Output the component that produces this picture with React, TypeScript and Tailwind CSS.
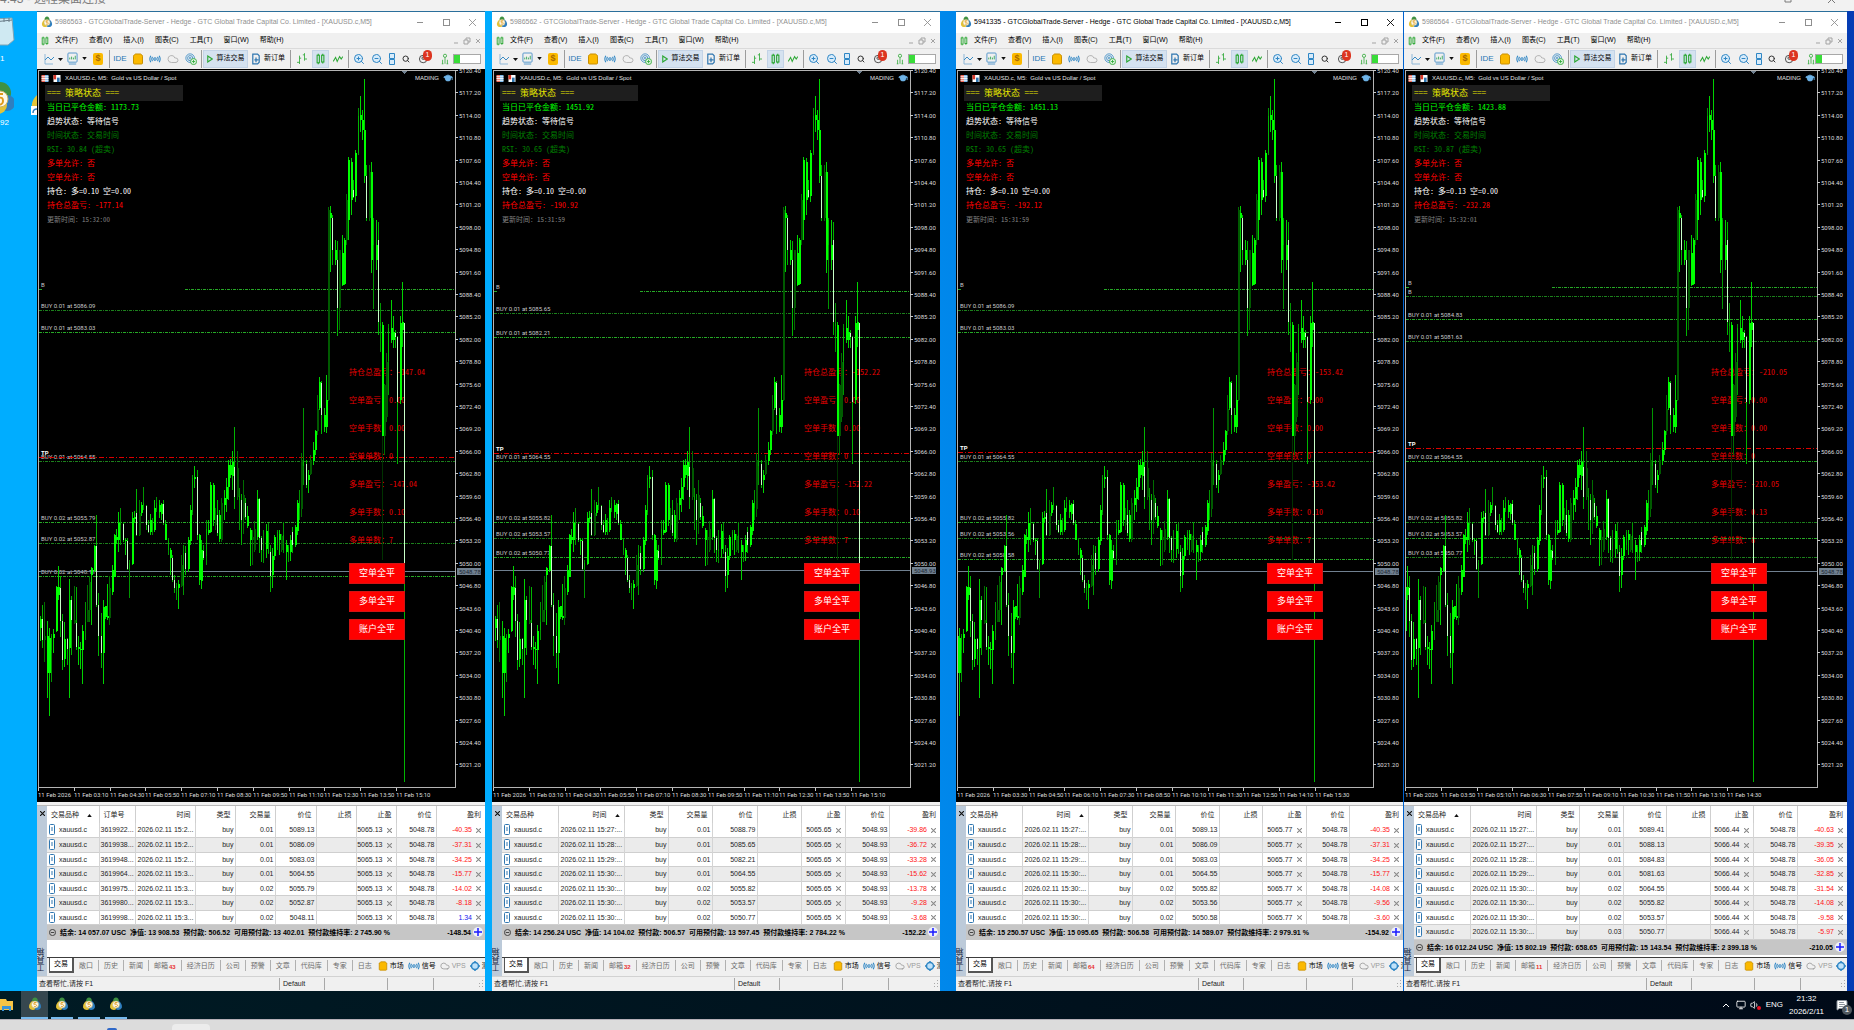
import type { ReactNode } from 'react';
import { clsx } from 'clsx';
import { Cloud, GraduationCap, MessageSquareText, Monitor, Search, ShoppingBag, Volume1, ZoomIn, ZoomOut } from 'lucide-react';

type Tone = 'g' | 'm' | 'd' | 'w';
// x, high, low, body top, body bottom, tone
type Candle = [number, number, number, number, number, Tone];

type Position = {
  order?: string;
  time: string;
  volume: string;
  open: string;
  profit: string;
};

type Terminal = {
  account: string;
  active?: boolean;
  closedToday: string;
  rsi: string;
  longLots: string;
  panelProfit: string;
  updated: string;
  profit: string;
  positions: Position[];
  tp: string;
  price: string;
  total: string;
  summary: string;
  mails: string;
  times: string[];
  shift: number;
  hiddenEntries: number;
  buttonsLeft: string;
  cols: string[];
  sortOn: 'symbol' | 'time';
};

const TOP_PRICE = 5120.4;
const PX_PER_POINT = 7;
const FIRST_TICK_Y = 1;

const CANDLES: Candle[] = [
  [38, 618, 628, 625, 628, 'w'], [40, 616, 641, 619, 628, 'g'], [42, 605, 648, 619, 640, 'w'], [44, 602, 662, 636, 640, 'd'],
  [47, 621, 698, 636, 673, 'g'], [49, 628, 716, 638, 673, 'g'], [51, 634, 682, 636, 650, 'm'], [53, 629, 653, 634, 638, 'g'],
  [56, 586, 632, 587, 631, 'g'], [58, 566, 600, 587, 595, 'g'], [60, 576, 637, 588, 621, 'w'], [62, 614, 670, 621, 660, 'w'],
  [64, 622, 667, 639, 659, 'g'], [67, 638, 665, 639, 649, 'w'], [69, 579, 698, 600, 648, 'g'], [71, 596, 655, 600, 620, 'w'],
  [74, 586, 624, 620, 623, 'd'], [76, 587, 650, 623, 647, 'w'], [78, 636, 665, 647, 649, 'g'], [80, 642, 669, 649, 650, 'g'],
  [82, 625, 684, 631, 650, 'g'], [85, 602, 640, 622, 630, 'm'], [87, 585, 622, 610, 622, 'd'], [89, 576, 622, 582, 610, 'd'],
  [91, 567, 625, 568, 575, 'g'], [94, 545, 572, 546, 571, 'g'], [96, 515, 607, 546, 605, 'w'], [98, 593, 656, 605, 636, 'w'],
  [101, 613, 668, 636, 653, 'w'], [103, 600, 684, 607, 653, 'g'], [105, 606, 619, 606, 617, 'g'], [107, 584, 620, 616, 618, 'g'],
  [109, 576, 625, 588, 618, 'd'], [112, 565, 595, 570, 592, 'g'], [114, 534, 577, 535, 577, 'g'], [116, 529, 544, 537, 540, 'g'],
  [118, 512, 552, 523, 540, 'g'], [120, 508, 545, 523, 525, 'm'], [123, 522, 542, 524, 540, 'w'], [125, 538, 555, 540, 541, 'g'],
  [127, 538, 570, 541, 569, 'w'], [129, 560, 598, 563, 569, 'm'], [132, 512, 565, 518, 564, 'g'], [134, 511, 523, 517, 519, 'g'],
  [136, 489, 536, 513, 535, 'w'], [139, 500, 536, 513, 535, 'd'], [141, 502, 516, 505, 513, 'g'], [143, 487, 510, 503, 506, 'm'],
  [146, 505, 530, 506, 525, 'w'], [148, 520, 533, 525, 532, 'w'], [150, 514, 535, 520, 532, 'g'], [152, 518, 535, 521, 530, 'm'],
  [154, 500, 532, 508, 530, 'g'], [156, 497, 512, 503, 510, 'm'], [159, 500, 518, 505, 512, 'g'], [161, 503, 520, 504, 514, 'g'],
  [163, 500, 525, 504, 523, 'w'], [165, 520, 540, 524, 540, 'g'], [168, 538, 555, 540, 550, 'm'], [170, 548, 575, 550, 558, 'g'],
  [172, 555, 582, 558, 580, 'w'], [174, 575, 593, 580, 588, 'w'], [176, 583, 600, 586, 590, 'm'], [178, 580, 609, 584, 588, 'g'],
  [181, 555, 587, 565, 586, 'd'], [183, 545, 595, 553, 585, 'm'], [185, 546, 575, 553, 569, 'w'], [188, 537, 572, 540, 569, 'g'],
  [190, 505, 545, 510, 541, 'g'], [192, 475, 515, 478, 512, 'm'], [194, 466, 488, 477, 479, 'g'], [197, 470, 540, 477, 535, 'w'],
  [199, 534, 585, 535, 580, 'g'], [201, 540, 589, 550, 581, 'g'], [203, 545, 560, 551, 558, 'w'], [206, 520, 565, 529, 556, 'm'],
  [208, 520, 535, 530, 533, 'g'], [210, 482, 533, 485, 532, 'g'], [213, 483, 526, 485, 520, 'g'], [215, 508, 530, 515, 525, 'd'],
  [217, 500, 536, 515, 533, 'w'], [219, 510, 542, 515, 539, 'g'], [221, 498, 542, 503, 540, 'd'], [224, 490, 520, 498, 505, 'g'],
  [226, 478, 512, 487, 499, 'g'], [228, 460, 500, 465, 487, 'g'], [230, 459, 478, 465, 475, 'g'], [232, 451, 490, 462, 476, 'g'],
  [234, 427, 509, 467, 497, 'w'], [237, 451, 500, 468, 497, 'd'], [239, 488, 530, 496, 500, 'm'], [241, 494, 545, 500, 520, 'w'],
  [243, 480, 534, 495, 518, 'd'], [245, 498, 520, 503, 517, 'w'], [247, 506, 528, 516, 526, 'g'], [250, 528, 566, 530, 540, 'g'],
  [252, 530, 565, 537, 540, 'd'], [254, 521, 552, 529, 550, 'd'], [257, 490, 540, 499, 537, 'g'], [259, 498, 553, 499, 538, 'w'],
  [261, 536, 562, 538, 550, 'w'], [263, 530, 563, 549, 551, 'm'], [266, 524, 558, 531, 549, 'g'], [268, 523, 554, 533, 553, 'm'],
  [270, 545, 592, 552, 576, 'w'], [272, 548, 588, 556, 575, 'g'], [274, 535, 560, 537, 556, 'g'], [277, 530, 550, 532, 545, 'm'],
  [279, 530, 555, 534, 540, 'g'], [281, 534, 552, 536, 550, 'd'], [283, 522, 553, 535, 540, 'm'], [286, 540, 580, 545, 552, 'g'],
  [288, 545, 562, 547, 553, 'm'], [290, 535, 561, 540, 552, 'g'], [292, 527, 553, 532, 545, 'w'], [295, 525, 547, 527, 545, 'g'],
  [297, 500, 535, 503, 531, 'g'], [299, 490, 520, 501, 508, 'm'], [301, 453, 517, 460, 509, 'd'], [303, 408, 485, 461, 466, 'm'],
  [306, 460, 488, 464, 485, 'w'], [308, 470, 493, 475, 480, 'g'], [310, 455, 475, 460, 474, 'd'], [313, 442, 465, 450, 461, 'g'],
  [315, 430, 455, 431, 450, 'g'], [317, 395, 435, 409, 431, 'd'], [319, 377, 410, 382, 408, 'g'], [321, 381, 434, 383, 415, 'w'],
  [324, 408, 432, 415, 427, 'g'], [326, 375, 433, 400, 427, 'g'], [328, 207, 401, 210, 400, 'd'], [330, 206, 272, 213, 218, 'g'],
  [332, 215, 265, 218, 250, 'w'], [335, 240, 265, 250, 260, 'g'], [337, 241, 336, 260, 308, 'w'], [339, 250, 330, 250, 308, 'd'],
  [342, 235, 286, 253, 285, 'g'], [344, 238, 285, 240, 284, 'g'], [346, 194, 245, 200, 240, 'd'], [348, 157, 240, 160, 220, 'g'],
  [351, 158, 215, 162, 200, 'g'], [353, 180, 198, 190, 197, 'w'], [355, 150, 202, 153, 196, 'g'], [358, 108, 155, 116, 153, 'm'],
  [360, 96, 132, 115, 120, 'g'], [362, 110, 140, 120, 130, 'g'], [364, 79, 183, 130, 176, 'g'], [366, 165, 221, 176, 218, 'w'],
  [369, 165, 221, 172, 218, 'd'], [371, 162, 273, 172, 260, 'g'], [373, 218, 309, 220, 245, 'm'], [376, 220, 270, 245, 260, 'g'],
  [378, 222, 335, 240, 322, 'w'], [380, 303, 352, 323, 326, 'm'], [382, 322, 436, 325, 436, 'g'], [384, 384, 455, 385, 436, 'd'],
  [386, 353, 422, 362, 417, 'd'], [388, 324, 395, 328, 361, 'm'], [391, 300, 343, 328, 340, 'g'], [393, 316, 348, 332, 340, 'g'],
  [395, 330, 348, 333, 337, 'w'], [397, 336, 464, 337, 402, 'w'], [400, 316, 404, 323, 400, 'g'], [402, 282, 347, 322, 330, 'g'],
  [404, 323, 782, 323, 563, 'w'],
];

const BODY: Record<Tone, string> = { g: '#00ff00', m: '#00b400', d: '#005a00', w: '#c8ffc8' };
const WICK: Record<Tone, string> = { g: '#00d200', m: '#009600', d: '#006e00', w: '#00b400' };

const TERMINALS: Terminal[] = [
  {
    account: '5986563',
    closedToday: '1173.73',
    rsi: '30.84',
    longLots: '0.10',
    panelProfit: '-177.14',
    updated: '15:32:00',
    profit: '-147.04',
    positions: [
      { order: '3619922...', time: '2026.02.11 15:2...', volume: '0.01', open: '5089.13', profit: '-40.35' },
      { order: '3619938...', time: '2026.02.11 15:2...', volume: '0.01', open: '5086.09', profit: '-37.31' },
      { order: '3619948...', time: '2026.02.11 15:2...', volume: '0.01', open: '5083.03', profit: '-34.25' },
      { order: '3619964...', time: '2026.02.11 15:3...', volume: '0.01', open: '5064.55', profit: '-15.77' },
      { order: '3619975...', time: '2026.02.11 15:3...', volume: '0.02', open: '5055.79', profit: '-14.02' },
      { order: '3619980...', time: '2026.02.11 15:3...', volume: '0.02', open: '5052.87', profit: '-8.18' },
      { order: '3619998...', time: '2026.02.11 15:3...', volume: '0.02', open: '5048.11', profit: '1.34' },
    ],
    tp: '5065.13',
    price: '5048.78',
    total: '-148.54',
    summary: '结余: 14 057.07 USC  净值: 13 908.53  预付款: 506.52  可用预付款: 13 402.01  预付款维持率: 2 745.90 %',
    mails: '43',
    times: ['2026', '03:10', '04:30', '05:50', '07:10', '08:30', '09:50', '11:10', '12:30', '13:50', '15:10'],
    shift: 0,
    hiddenEntries: 1,
    buttonsLeft: 'left-[312px]',
    cols: ['w-[52px]', 'w-[36px]', 'w-[60px]', 'w-[40px]', 'w-[40px]', 'w-[41px]', 'w-[40px]', 'w-[40px]', 'w-[40px]', ''],
    sortOn: 'symbol',
  },
  {
    account: '5986562',
    closedToday: '1451.92',
    rsi: '30.65',
    longLots: '0.10',
    panelProfit: '-190.92',
    updated: '15:31:59',
    profit: '-152.22',
    positions: [
      { time: '2026.02.11 15:27:...', volume: '0.01', open: '5088.79', profit: '-39.86' },
      { time: '2026.02.11 15:28:...', volume: '0.01', open: '5085.65', profit: '-36.72' },
      { time: '2026.02.11 15:29:...', volume: '0.01', open: '5082.21', profit: '-33.28' },
      { time: '2026.02.11 15:30:...', volume: '0.01', open: '5064.55', profit: '-15.62' },
      { time: '2026.02.11 15:30:...', volume: '0.02', open: '5055.82', profit: '-13.78' },
      { time: '2026.02.11 15:30:...', volume: '0.02', open: '5053.57', profit: '-9.28' },
      { time: '2026.02.11 15:30:...', volume: '0.02', open: '5050.77', profit: '-3.68' },
    ],
    tp: '5065.65',
    price: '5048.93',
    total: '-152.22',
    summary: '结余: 14 256.24 USC  净值: 14 104.02  预付款: 506.57  可用预付款: 13 597.45  预付款维持率: 2 784.22 %',
    mails: '32',
    times: ['2026', '03:10', '04:30', '05:50', '07:10', '08:30', '09:50', '11:10', '12:30', '13:50', '15:10'],
    shift: 0,
    hiddenEntries: 1,
    buttonsLeft: 'left-[312px]',
    cols: ['w-[56px]', 'w-[66px]', 'w-[44px]', 'w-[44px]', 'w-[45px]', 'w-[44px]', 'w-[44px]', 'w-[44px]', ''],
    sortOn: 'time',
  },
  {
    account: '5941335',
    active: true,
    closedToday: '1451.13',
    rsi: '30.65',
    longLots: '0.10',
    panelProfit: '-192.12',
    updated: '15:31:59',
    profit: '-153.42',
    positions: [
      { time: '2026.02.11 15:27:...', volume: '0.01', open: '5089.13', profit: '-40.35' },
      { time: '2026.02.11 15:28:...', volume: '0.01', open: '5086.09', profit: '-37.31' },
      { time: '2026.02.11 15:29:...', volume: '0.01', open: '5083.03', profit: '-34.25' },
      { time: '2026.02.11 15:30:...', volume: '0.01', open: '5064.55', profit: '-15.77' },
      { time: '2026.02.11 15:30:...', volume: '0.02', open: '5055.82', profit: '-14.08' },
      { time: '2026.02.11 15:30:...', volume: '0.02', open: '5053.56', profit: '-9.56' },
      { time: '2026.02.11 15:30:...', volume: '0.02', open: '5050.58', profit: '-3.60' },
    ],
    tp: '5065.77',
    price: '5048.78',
    total: '-154.92',
    summary: '结余: 15 250.57 USC  净值: 15 095.65  预付款: 506.58  可用预付款: 14 589.07  预付款维持率: 2 979.91 %',
    mails: '64',
    times: ['2026', '03:30', '04:50', '06:10', '07:30', '08:50', '10:10', '11:30', '12:50', '14:10', '15:30'],
    shift: -9,
    hiddenEntries: 1,
    buttonsLeft: 'left-[311px]',
    cols: ['w-[56px]', 'w-[66px]', 'w-[44px]', 'w-[43px]', 'w-[44px]', 'w-[43px]', 'w-[44px]', 'w-[43px]', ''],
    sortOn: 'time',
  },
  {
    account: '5986564',
    closedToday: '1423.88',
    rsi: '30.87',
    longLots: '0.13',
    panelProfit: '-232.28',
    updated: '15:32:01',
    profit: '-210.05',
    positions: [
      { time: '2026.02.11 15:27:...', volume: '0.01', open: '5089.41', profit: '-40.63' },
      { time: '2026.02.11 15:27:...', volume: '0.01', open: '5088.13', profit: '-39.35' },
      { time: '2026.02.11 15:28:...', volume: '0.01', open: '5084.83', profit: '-36.05' },
      { time: '2026.02.11 15:29:...', volume: '0.01', open: '5081.63', profit: '-32.85' },
      { time: '2026.02.11 15:30:...', volume: '0.02', open: '5064.55', profit: '-31.54' },
      { time: '2026.02.11 15:30:...', volume: '0.02', open: '5055.82', profit: '-14.08' },
      { time: '2026.02.11 15:30:...', volume: '0.02', open: '5053.57', profit: '-9.58' },
      { time: '2026.02.11 15:30:...', volume: '0.03', open: '5050.77', profit: '-5.97' },
    ],
    tp: '5066.44',
    price: '5048.78',
    total: '-210.05',
    summary: '结余: 16 012.24 USC  净值: 15 802.19  预付款: 658.65  可用预付款: 15 143.54  预付款维持率: 2 399.18 %',
    mails: '11',
    times: ['2026', '03:50', '05:10', '06:30', '07:50', '09:10', '10:30', '11:50', '13:10', '14:30'],
    shift: -18,
    hiddenEntries: 2,
    buttonsLeft: 'left-[307px]',
    cols: ['w-[56px]', 'w-[66px]', 'w-[43px]', 'w-[44px]', 'w-[43px]', 'w-[44px]', 'w-[43px]', 'w-[44px]', ''],
    sortOn: 'symbol',
  },
];

const MENUS = ['文件(F)', '查看(V)', '插入(I)', '图表(C)', '工具(T)', '窗口(W)', '帮助(H)'];

function priceY(price: number): number {
  return Math.round(FIRST_TICK_Y + (TOP_PRICE - price) * PX_PER_POINT);
}

function MetaTraderIcon({ className }: { className: string }) {
  return (
    <svg viewBox="0 0 24 24" className={className}>
      <path d="M12 1c3 0 5 3 5 6l-5 5-5-5c0-3 2-6 5-6z" fill="#3f9142" />
      <path d="M7 7c-4 3-6 8-5 11 2 5 8 5 10 3V10z" fill="#e3c338" />
      <path d="M17 7c4 3 6 8 5 11-2 5-8 5-10 3V10z" fill="#2f7fc0" />
      <circle cx="12" cy="13" r="6" fill="#fdf8ea" stroke="#c8b268" />
      <path d="M14.500 9.500h-4l-.5 3c3-.8 4.500.2 4.500 2s-2.500 2.500-4.500 1.300" fill="none" stroke="#e09a1a" strokeWidth="1.600" />
    </svg>
  );
}

function CandlesIcon({ className }: { className: string }) {
  return (
    <svg viewBox="0 0 12 16" className={className} fill="none" stroke="#2ea836" strokeWidth="1.500">
      <path d="M3 1v2M3 13v2M9 1v2M9 12v2" />
      <rect x="1.500" y="3" width="3" height="10" />
      <rect x="7.500" y="3" width="3" height="9" />
    </svg>
  );
}

function SignalIcon() {
  return (
    <svg viewBox="0 0 14 12" className="h-2.5 w-3" fill="none" stroke="#2f86c4" strokeWidth="1.300">
      <circle cx="7" cy="6" r="1.500" />
      <path d="M4 3.500c-1 1.500-1 3.500 0 5M10 3.500c1 1.500 1 3.500 0 5M2 2c-1.500 2.500-1.500 5.500 0 8M12 2c1.500 2.500 1.500 5.500 0 8" />
    </svg>
  );
}

function ToolButton({ label, width, pressed, children }: { label: string; width: string; pressed?: boolean; children: ReactNode }) {
  return (
    <button
      aria-label={label}
      className={clsx('flex h-[18px] shrink-0 items-center justify-center', width, pressed && 'border border-[#c3d3e6] bg-[#d5e2f0]')}
    >
      {children}
    </button>
  );
}

function ToolSeparator() {
  return <div className="mx-px h-[18px] w-px shrink-0 bg-[#9c9c9c]" />;
}

function Caret() {
  return (
    <svg viewBox="0 0 6 4" className="h-[3px] w-[5px]">
      <path d="M0 0h6L3 4z" fill="#111" />
    </svg>
  );
}

function TitleBar({ terminal }: { terminal: Terminal }) {
  return (
    <div className={clsx('flex h-[21px] shrink-0 items-center bg-white pb-px pl-1', terminal.active ? 'text-black' : 'text-[#8f8f8f]')}>
      <MetaTraderIcon className="h-3 w-3 shrink-0" />
      <h2 className="ml-0.5 min-w-0 flex-1 text-[7px] whitespace-nowrap">
        {terminal.account} - GTCGlobalTrade-Server - Hedge - GTC Global Trade Capital Co. Limited - [XAUUSD.c,M5]
      </h2>
      <button aria-label="最小化" className="flex w-[26px] justify-center">
        <span className="h-px w-1.5 bg-current" />
      </button>
      <button aria-label="最大化" className="flex w-[26px] justify-center">
        <span className="h-[7px] w-[7px] border border-current" />
      </button>
      <button aria-label="关闭" className="flex w-[26px] justify-center">
        <svg viewBox="0 0 8 8" className="h-[7px] w-[7px]" fill="none" stroke="currentColor">
          <path d="M0 0l8 8M8 0L0 8" />
        </svg>
      </button>
    </div>
  );
}

function MenuBar() {
  return (
    <nav className="flex h-[15px] shrink-0 items-center bg-[#f0f0f0] pl-1">
      <CandlesIcon className="mr-1.5 h-2.5 w-2" />
      <div className="flex gap-[11px]">
        {MENUS.map((menu) => (
          <button key={menu} className="text-[7px] whitespace-nowrap text-black">
            {menu}
          </button>
        ))}
      </div>
      <svg viewBox="0 0 28 8" className="mr-1 ml-auto h-2 w-7" fill="none" stroke="#a3a3a3">
        <path d="M1 6h4M11 3h4v4h-4zM13 3V1h4v4h-2M23 2l4 4M27 2l-4 4" />
      </svg>
    </nav>
  );
}

function Toolbar() {
  return (
    <div className="flex h-[21px] shrink-0 items-center overflow-hidden border-t border-[#dadada] bg-[#f0f0f0] pb-px pl-1">
      <ToolButton label="图表线型" width="w-[23px]">
        <svg viewBox="0 0 22 12" className="h-3 w-[22px]" fill="none" stroke="#3d8cc4">
          <path d="M3 1v10h8" stroke="#8fb8d8" />
          <path d="M3 7l3-3 3 3 3-3" />
          <path d="M16 5h5l-2.500 3z" fill="#111" stroke="none" />
        </svg>
      </ToolButton>
      <ToolButton label="图表模板" width="w-[16px]">
        <svg viewBox="0 0 12 14" className="h-[13px] w-[11px]" fill="none" stroke="#4a90c8">
          <rect x="1" y="1" width="10" height="10" rx="1" />
          <path d="M3 8V6M5 8V5M7 8V6M9 8V4" stroke="#36a85a" />
          <path d="M2 13h8" />
        </svg>
      </ToolButton>
      <ToolButton label="模板列表" width="w-[8px]">
        <Caret />
      </ToolButton>
      <ToolButton label="报价" width="w-[20px]">
        <span className="flex h-3 w-2.5 items-center justify-center rounded-xs bg-[#fbb900] text-[9px] font-bold text-[#a86a00]">$</span>
      </ToolButton>
      <ToolSeparator />
      <ToolButton label="IDE" width="w-[18px]">
        <span className="text-[8px] text-[#1f77b4]">IDE</span>
      </ToolButton>
      <ToolButton label="市场" width="w-[17px]">
        <ShoppingBag className="h-3 w-3 fill-[#fbb900] text-[#c98f00]" />
      </ToolButton>
      <ToolButton label="信号" width="w-[18px]">
        <SignalIcon />
      </ToolButton>
      <ToolButton label="VPS" width="w-[18px]">
        <Cloud className="h-3 w-3 text-[#b5b5b5]" />
      </ToolButton>
      <ToolButton label="服务" width="w-[18px]">
        <svg viewBox="0 0 14 14" className="h-3 w-3" fill="none" stroke="#3d8cc4">
          <circle cx="6" cy="6" r="5" />
          <circle cx="6" cy="6" r="3" />
          <circle cx="6" cy="6" r="1" />
          <circle cx="10" cy="10" r="3.500" fill="#eafbea" stroke="#2ea836" />
          <path d="M8 10h4M10 8v4" stroke="#2ea836" />
        </svg>
      </ToolButton>
      <ToolSeparator />
      <button className="flex h-[18px] w-[45px] shrink-0 items-center justify-center gap-1 border border-[#c3d3e6] bg-[#d5e2f0] text-[7px] whitespace-nowrap text-black">
        <svg viewBox="0 0 8 10" className="h-2 w-1.5" fill="none" stroke="#2ea836" strokeWidth="1.500">
          <path d="M1 1l6 4-6 4z" />
        </svg>
        算法交易
      </button>
      <button className="flex h-[18px] w-[41px] shrink-0 items-center justify-center gap-1 text-[7px] whitespace-nowrap text-black">
        <svg viewBox="0 0 10 14" className="h-3 w-2" fill="none" stroke="#2f76b0" strokeWidth="1.500">
          <path d="M1 1h6l2 2v8l-2 2H1zM3 8h5M5 5v6" />
        </svg>
        新订单
      </button>
      <ToolSeparator />
      <ToolButton label="柱形图" width="w-[20px]">
        <svg viewBox="0 0 12 14" className="h-3 w-2.5" fill="none" stroke="#2ea836">
          <path d="M3 3v10M0 11h3M3 6h2M9 0v9M7 2h2M9 7h3" />
        </svg>
      </ToolButton>
      <ToolButton label="蜡烛图" width="w-[17px]" pressed>
        <CandlesIcon className="h-3 w-[9px]" />
      </ToolButton>
      <ToolButton label="折线图" width="w-[18px]">
        <svg viewBox="0 0 12 10" className="h-2 w-2.5" fill="none" stroke="#2ea836" strokeWidth="1.300">
          <path d="M0 8l3-5 2 5 3-6 2 3 2-3" />
        </svg>
      </ToolButton>
      <ToolSeparator />
      <ToolButton label="放大" width="w-[18px]">
        <ZoomIn className="h-3 w-3 fill-[#d7ebfa] text-[#2f86c4]" />
      </ToolButton>
      <ToolButton label="缩小" width="w-[17px]">
        <ZoomOut className="h-3 w-3 fill-[#d7ebfa] text-[#2f86c4]" />
      </ToolButton>
      <div className="flex h-[18px] w-[14px] min-w-0 shrink items-center justify-center overflow-hidden">
        <svg viewBox="0 0 6 12" className="h-3 w-1.5" fill="#d7ebfa" stroke="#2f86c4">
          <path d="M.5.500h5v5h-5zM.5 6.500h5v5h-5z" />
        </svg>
      </div>
      <ToolButton label="搜索" width="w-[14px]">
        <Search className="h-2 w-2 text-[#333]" strokeWidth={3} />
      </ToolButton>
      <div className="relative ml-1.5 h-[18px] w-[18px] shrink-0">
        <svg viewBox="0 0 12 12" className="mt-1 h-2.5 w-2.5" fill="none" stroke="#333">
          <circle cx="5" cy="6" r="4.500" />
          <circle cx="5" cy="5" r="1.500" />
        </svg>
        <span className="absolute top-0 left-1 flex h-[11px] w-[9px] items-center justify-center rounded-full bg-[#dc3520] text-[7px] text-white">1</span>
      </div>
      <svg viewBox="0 0 10 14" className="ml-1 h-3 w-2 shrink-0" fill="none" stroke="#2ea836">
        <circle cx="5" cy="3" r="2" />
        <path d="M5 5v8M2 8v5M8 8v5M1 13h2M7 13h2" />
      </svg>
      <div className="mr-1 ml-auto h-2.5 w-[28px] shrink-0 border border-[#a8a8a8] bg-white">
        <div className="h-full w-[6px] bg-[#39dc39]" />
      </div>
    </div>
  );
}

function TradeLevels({ terminal }: { terminal: Terminal }) {
  return (
    <g fontSize="6">
      {terminal.positions.map((position, i) => {
        const y = priceY(Number(position.open));
        const hidden = i < terminal.hiddenEntries;
        // the first entry shows only a stub on the left and its line from the open time
        const cut = i === 0;
        return (
          <g key={position.open}>
            <g stroke={i % 2 ? '#1c801c' : '#26a826'} strokeDasharray="3 1 1 1">
              {cut && <path d={`M2 ${y}.5H6`} />}
              <path d={`M${cut ? 148 : 2} ${y}.5H418`} />
            </g>
            <text x="4" y={y - 2} fill="#c8c8c8">
              {hidden ? 'B' : `BUY ${position.volume} at ${position.open}`}
            </text>
          </g>
        );
      })}
      <path d={`M2 ${priceY(Number(terminal.tp))}.5H418`} stroke="#dc0000" strokeDasharray="5 2 1 2" />
      <text x="4" y={priceY(Number(terminal.tp)) - 2} fill="#fff" fontWeight="bold">
        TP
      </text>
      <path d={`M2 ${priceY(Number(terminal.price))}.5H418`} stroke="#708090" />
    </g>
  );
}

function Candles({ shift }: { shift: number }) {
  return (
    <g>
      {CANDLES.filter(([x]) => x + shift >= 38).map(([x, high, low, top, bottom, tone]) => {
        const left = x - 37 + shift;
        return (
          <g key={x}>
            {x === 382 && <rect x={left} y={367} width="1" height="124" fill="#003200" />}
            <rect x={left} y={high - 69} width="1" height={low - high} fill={WICK[tone]} />
            <rect x={left} y={top - 69} width={tone === 'g' || tone === 'd' ? 2 : 1} height={Math.max(bottom - top, 1)} fill={BODY[tone]} />
          </g>
        );
      })}
    </g>
  );
}

function StrategyPanel({ terminal }: { terminal: Terminal }) {
  return (
    <div className="absolute top-4 left-2 w-[138px] font-['Noto_Sans_Mono_CJK_SC','Noto_Sans_CJK_SC',monospace] text-[8px] leading-[14px] whitespace-nowrap">
      <p className="bg-[#1e1e1e] pl-0.5 text-[9px] leading-4 text-[#e6e600]">=== 策略状态 ===</p>
      <div className="-mt-px pl-0.5">
        <p className="text-[#00ff00]">当日已平仓金额: {terminal.closedToday}</p>
        <p className="text-white">趋势状态: 等待信号</p>
        <p className="text-[#008000]">时间状态: 交易时间</p>
        <p className="text-[#008000]">RSI: {terminal.rsi} (超卖)</p>
        <p className="text-[#ff0000]">多单允许: 否</p>
        <p className="text-[#ff0000]">空单允许: 否</p>
        <p className="text-white">持仓: 多={terminal.longLots} 空=0.00</p>
        <p className="text-[#ff0000]">持仓总盈亏: {terminal.panelProfit}</p>
        <p className="text-[7px] text-[#808080]">更新时间: {terminal.updated}</p>
      </div>
    </div>
  );
}

function Chart({ terminal }: { terminal: Terminal }) {
  const lines = [
    `持仓总盈亏：${terminal.profit}`,
    '空单盈亏：0.00',
    '空单手数：0.00',
    '空单单数：0',
    `多单盈亏：${terminal.profit}`,
    `多单手数：${terminal.longLots}`,
    `多单单数：${terminal.positions.length}`,
  ];
  const ticks = Array.from({ length: 32 }, (_, i) => TOP_PRICE - i * 3.2);

  return (
    <div className="relative flex min-h-[733px] flex-1 overflow-hidden bg-black">
      <div className={clsx("absolute top-[289px] font-['Noto_Sans_Mono_CJK_SC','Noto_Sans_CJK_SC',monospace] text-[8px] leading-7 whitespace-nowrap text-[#e60000]", terminal.buttonsLeft)}>
        {lines.map((line) => (
          <p key={line}>{line}</p>
        ))}
      </div>

      <div className="relative min-w-0 flex-1">
        <svg className="absolute inset-0 h-full w-full font-[Roboto,'Liberation_Sans',sans-serif]" shapeRendering="crispEdges">
          <TradeLevels terminal={terminal} />
          <Candles shift={terminal.shift} />
          <path d="M1.500 719V1.500H418M1 718.500H419" fill="none" stroke="#b4b4b4" />
          <path d={`M${364 + terminal.shift} 2h6l-3 3z`} fill="#708090" />
          <g fontSize="6" fill="#dcdcdc">
            {terminal.times.map((time, i) => (
              <g key={time}>
                <path d={`M${1 + Math.round(i * 35.8)}.5 719v3`} stroke="#c8c8c8" />
                <text x={1 + Math.round(i * 35.8)} y="728">
                  11 Feb {time}
                </text>
              </g>
            ))}
          </g>
        </svg>
        <div className="absolute top-1 left-1 flex items-center gap-1 text-[6px] leading-[10px] whitespace-nowrap text-[#e0e0e0]">
          <svg viewBox="0 0 8 8" className="h-[7px] w-2">
            <path d="M0 0h4v8H0z" fill="#f06a5a" />
            <path d="M4 0h4v8H4z" fill="#7db9ea" />
            <path d="M0 2h8M0 4h8M0 6h8" stroke="#fff" />
          </svg>
          <svg viewBox="0 0 8 8" className="h-[7px] w-2">
            <path d="M0 0h8v8H0z" fill="#fff" />
            <path d="M0 0h3v5H0z" fill="#d9382a" />
            <path d="M4 3h3v5H4z" fill="#2f76b0" />
          </svg>
          <span>XAUUSD.c, M5:&nbsp; Gold vs US Dollar / Spot</span>
        </div>
        <StrategyPanel terminal={terminal} />
        <div className={clsx('absolute top-[494px] flex flex-col gap-[7px]', terminal.buttonsLeft)}>
          {['空单全平', '多单全平', '账户全平'].map((label) => (
            <button key={label} className="h-[21px] w-[56px] border border-[#d21414] bg-[#ff0000] text-[9px] text-white">
              {label}
            </button>
          ))}
        </div>
      </div>

      <div className="relative w-[30px] shrink-0">
        <svg className="absolute inset-0 h-full w-full font-[Roboto,'Liberation_Sans',sans-serif]" shapeRendering="crispEdges">
          <path d="M.5 2v717" stroke="#b4b4b4" />
          <g fontSize="6" fill="#dcdcdc">
            {ticks.map((price) => (
              <g key={price}>
                <path d={`M0 ${priceY(price)}.5h3`} stroke="#c8c8c8" />
                {Math.abs(price - Number(terminal.price)) > 1 && (
                  <text x="4" y={priceY(price) + 3}>
                    {price.toFixed(2)}
                  </text>
                )}
              </g>
            ))}
            <rect x="2" y={priceY(Number(terminal.price)) - 3} width="24" height="7" fill="#708090" />
            <text x="4" y={priceY(Number(terminal.price)) + 3} fill="#1c2733">
              {terminal.price}
            </text>
          </g>
        </svg>
      </div>
      <div className="absolute top-1 right-8 flex items-center gap-1 text-[6px] leading-[10px] text-[#e0e0e0]">
        MADING
        <GraduationCap className="h-2.5 w-2.5 fill-[#6fb4e8] text-[#6fb4e8]" />
      </div>
    </div>
  );
}

function CloseMark() {
  return (
    <svg viewBox="0 0 6 6" className="inline h-[5px] w-[5px]" stroke="#8a8a8a" strokeWidth="1.300">
      <path d="M0 0l6 6M6 0L0 6" />
    </svg>
  );
}

function SortMark() {
  return (
    <svg viewBox="0 0 6 4" className="ml-2 inline h-[3px] w-[5px] align-middle">
      <path d="M0 4h6L3 0z" fill="#111" />
    </svg>
  );
}

function Positions({ terminal }: { terminal: Terminal }) {
  const hasOrder = terminal.positions[0].order !== undefined;
  const headers = ['类型', '交易量', '价位', '止损', '止盈', '价位', '盈利'];

  return (
    <table className="w-full table-fixed border-collapse bg-white text-[7px] leading-[13px] whitespace-nowrap text-[#1e1e1e]">
      <colgroup>
        {terminal.cols.map((width, i) => (
          <col key={i} className={width} />
        ))}
      </colgroup>
      <thead>
        <tr className="h-[17px] [&>th]:border-r [&>th]:border-[#cfcfcf] [&>th]:px-1 [&>th]:font-normal [&>th:last-child]:border-r-0">
          <th className="text-left">
            交易品种
            {terminal.sortOn === 'symbol' && <SortMark />}
          </th>
          {hasOrder && <th className="text-left">订单号</th>}
          <th className="text-right">
            时间
            {terminal.sortOn === 'time' && <SortMark />}
          </th>
          {headers.map((header, i) => (
            <th key={i} className="text-right">
              {header}
            </th>
          ))}
        </tr>
      </thead>
      <tbody>
        {terminal.positions.map((position, i) => (
          <tr
            key={position.open}
            className={clsx(
              'border-b border-[#cfcfcf] [&>td]:border-r [&>td]:border-[#d4d4d4] [&>td]:py-0 [&>td:last-child]:border-r-0',
              i % 2 ? 'h-[15px] bg-[#ebebeb]' : 'h-[14px]'
            )}
          >
            <td className="pl-0.5">
              <span className="flex items-center gap-1">
                <svg viewBox="0 0 6 11" className="h-[11px] w-1.5" fill="#fff" stroke="#2f76b0">
                  <rect x=".5" y=".5" width="5" height="10" rx="1" />
                  <path d="M2 4h2M2 6h2" />
                </svg>
                xauusd.c
              </span>
            </td>
            {hasOrder && <td className="pl-px">{position.order}</td>}
            <td className="pl-0.5">{position.time}</td>
            <td className="pr-px text-right">buy</td>
            <td className="pr-px text-right">{position.volume}</td>
            <td className="pr-px text-right">{position.open}</td>
            <td />
            <td className="pr-1 text-right">
              {terminal.tp}
              <span className="ml-1">
                <CloseMark />
              </span>
            </td>
            <td className="pr-px text-right">{terminal.price}</td>
            <td className={clsx('pr-1 text-right', position.profit.startsWith('-') ? 'text-[#ff1414]' : 'text-[#2222ee]')}>
              {position.profit}
              <span className="ml-1">
                <CloseMark />
              </span>
            </td>
          </tr>
        ))}
      </tbody>
      <tfoot>
        <tr className="h-4 bg-[#c6c6c6] font-bold text-black">
          <td colSpan={terminal.cols.length - 1} className="pl-0.5">
            <span className="flex items-center gap-1 whitespace-pre">
              <svg viewBox="0 0 8 8" className="h-[7px] w-[7px]" fill="none" stroke="#333">
                <circle cx="4" cy="4" r="3.500" />
                <path d="M2 4h4" />
              </svg>
              {terminal.summary}
            </span>
          </td>
          <td className="pr-0.5">
            <span className="flex items-center justify-end gap-0.5">
              {terminal.total}
              <svg viewBox="0 0 10 10" className="h-2.5 w-2.5">
                <circle cx="5" cy="5" r="5" fill="#eef0fa" />
                <path d="M5 1v8M1 5h8" stroke="#1a1aff" strokeWidth="1.500" />
              </svg>
            </span>
          </td>
        </tr>
      </tfoot>
    </table>
  );
}

function Toolbox({ terminal }: { terminal: Terminal }) {
  return (
    <section className="flex h-[171px] shrink-0 border-t border-[#b9b9b9] bg-[#f0f0f0]">
      <div className="flex w-2.5 shrink-0 flex-col items-center justify-between bg-[#bccad9] py-1">
        <svg viewBox="0 0 6 6" className="mt-px h-[5px] w-[5px]" stroke="#111" strokeWidth="1.300">
          <path d="M0 0l6 6M6 0L0 6" />
        </svg>
        <span className="rotate-180 text-[8px] leading-[10px] text-[#1c2a44] [writing-mode:vertical-rl]">工具箱</span>
      </div>
      <div className="flex min-w-0 flex-1 flex-col">
        <div className="h-[151px] overflow-hidden bg-white">
          <Positions terminal={terminal} />
        </div>
        <div className="flex h-[18px] items-start overflow-hidden border-t border-[#3c3c3c] pl-0.5 text-[7px] leading-[14px] whitespace-nowrap text-[#6e6e6e]">
          <button className="-mt-px h-4 w-[25px] shrink-0 border-r-2 border-b-2 border-l border-[#555] bg-white text-black">交易</button>
          <div className="flex h-[14px] shrink-0 items-center [&>button]:border-r [&>button]:border-[#b0b0b0] [&>button]:px-[5px] [&>button]:leading-[11px] [&>button:last-child]:border-r-0">
            <button>敞口</button>
            <button>历史</button>
            <button>新闻</button>
            <button>
              邮箱<sub className="pl-px text-[6px] leading-none font-bold text-[#e83030]">{terminal.mails}</sub>
            </button>
            <button>经济日历</button>
            <button>公司</button>
            <button>预警</button>
            <button>文章</button>
            <button>代码库</button>
            <button>专家</button>
            <button>日志</button>
          </div>
          <div className="flex h-4 shrink-0 items-center gap-1 pl-px text-black [&>a]:flex [&>a]:items-center [&>a]:gap-0.5">
            <a href="#market">
              <ShoppingBag className="h-2.5 w-2.5 fill-[#fbb900] text-[#c98f00]" />
              市场
            </a>
            <a href="#signals">
              <SignalIcon />
              信号
            </a>
            <a href="#vps" className="text-[#9a9a9a]">
              <Cloud className="h-2.5 w-2.5" />
              VPS
            </a>
            <a href="#tester">
              <svg viewBox="0 0 10 10" className="h-2.5 w-2.5" fill="#bfe2fa" stroke="#2f86c4" strokeWidth="1.500">
                <circle cx="5" cy="5" r="3.500" />
                <path d="M5 0v1M5 9v1M0 5h1M9 5h1" />
              </svg>
              测试
            </a>
          </div>
        </div>
      </div>
    </section>
  );
}

function StatusBar() {
  return (
    <footer className="flex h-[15px] shrink-0 items-center border-t border-[#d2d2d2] bg-[#f0f0f0] pl-0.5 text-[7px] text-[#222]">
      <span className="w-[240px] shrink-0">查看帮忙,请按 F1</span>
      <span className="flex h-3 w-[45px] shrink-0 items-center border-l border-[#a8a8a8] pl-[3px]">Default</span>
      <span className="h-3 w-[63px] shrink-0 border-l border-[#a8a8a8]" />
      <span className="h-3 w-[46px] shrink-0 border-l border-[#a8a8a8]" />
      <span className="h-3 flex-1 border-l border-[#a8a8a8]" />
      <svg viewBox="0 0 8 8" className="h-2 w-2" fill="#a8a8a8">
        <path d="M5 0h1v1H5zM5 3h1v1H5zM2 3h1v1H2zM5 6h1v1H5zM2 6h1v1H2z" />
      </svg>
    </footer>
  );
}

function TerminalWindow({ terminal, column }: { terminal: Terminal; column: string }) {
  return (
    <article className={clsx('flex min-w-0 flex-col overflow-hidden border-t border-[#2b6f9b] bg-[#f0f0f0]', column)}>
      <TitleBar terminal={terminal} />
      <MenuBar />
      <Toolbar />
      <Chart terminal={terminal} />
      <div className="h-[3px] shrink-0 bg-[#f0f0f0]" />
      <Toolbox terminal={terminal} />
      <StatusBar />
    </article>
  );
}

function DesktopIcons() {
  return (
    <div className="flex flex-col overflow-hidden text-[8px] text-white">
      <svg viewBox="0 0 37 30" className="mt-1.5 h-[30px] w-[37px]">
        <path d="M-8 2l20-1 2 22-6 5H-8z" fill="#cfe9f2" stroke="#7fa4b5" />
        <path d="M-6 5L12 3M-6 2v3M-1 1v4M4 1v4M9 1v4" stroke="#6a7c88" />
      </svg>
      <span className="mt-1.5 leading-3">1</span>
      <div className="mt-4 flex items-end justify-between">
        <svg viewBox="0 0 14 34" className="h-[34px] w-[14px]">
          <circle cx="0" cy="12" r="11" fill="#3f9142" />
          <circle cx="7" cy="22" r="8" fill="#2f7fc0" />
          <circle cx="-2" cy="24" r="9" fill="#e3c338" />
          <circle cx="0" cy="18" r="8" fill="#fdf8ea" stroke="#c8b268" />
          <path d="M3 13h-5v4c4-1 5 0 5 3s-2 4-5 3" fill="none" stroke="#e09a1a" strokeWidth="2" />
        </svg>
        <svg viewBox="0 0 6 20" className="h-5 w-1.5">
          <path d="M6 0C3 3 0 7 1 14h5z" fill="#e3c338" />
          <path d="M0 11h6v9H0z" fill="#fff" />
          <path d="M2 18c0-3 1-4 4-4" fill="none" stroke="#2f7fc0" strokeWidth="1.500" />
        </svg>
      </div>
      <span className="mt-0.5 leading-3">92</span>
    </div>
  );
}

function Taskbar() {
  return (
    <div className="flex h-7 shrink-0 items-center bg-linear-to-r from-[#001b24] to-[#000a18] text-white">
      <button aria-label="文件资源管理器" className="w-[21px]">
        <svg viewBox="0 0 14 14" className="h-3.5 w-3.5">
          <path d="M0 1h6l1 2h6v9H0z" fill="#f6c445" />
          <path d="M2 13V8h9v5H9v-2H4v2z" fill="#3a94d8" />
        </svg>
      </button>
      {TERMINALS.map((terminal, i) => (
        <button
          key={terminal.account}
          aria-label={terminal.account}
          className={clsx(
            'flex h-full items-center justify-center border-b-2 border-[#76b9ed]',
            i === 0 ? 'mr-[3px] w-[27px] bg-[#36474f]' : 'mr-[5px] w-[22px]'
          )}
        >
          <MetaTraderIcon className="h-4 w-3.5" />
        </button>
      ))}
      <div className="ml-auto flex items-center pr-1.5">
        <svg viewBox="0 0 8 5" className="mr-1.5 h-[5px] w-2" fill="none" stroke="currentColor">
          <path d="M1 4l3-3 3 3" />
        </svg>
        <Monitor className="mr-1 h-2.5 w-2.5" />
        <span className="relative mr-1.5">
          <Volume1 className="h-2.5 w-2.5" />
          <span className="absolute -right-px bottom-0 h-1 w-1 rounded-full bg-[#e81123]" />
        </span>
        <span className="mr-1.5 text-[8px]">ENG</span>
        <div className="mr-3 text-center text-[8px] leading-[13px]">
          <p>21:32</p>
          <p>2026/2/11</p>
        </div>
        <span className="relative">
          <MessageSquareText className="h-3 w-3 fill-white text-[#8a929c]" />
          <span className="absolute -right-1 -bottom-1 flex h-2.5 w-2.5 items-center justify-center rounded-full bg-[#50585f] text-[8px]">1</span>
        </span>
      </div>
    </div>
  );
}

const COLUMNS = ['col-start-2', 'col-start-4', 'col-start-6', 'col-start-8'];

export default function App() {
  return (
    <div className="flex min-h-screen flex-col overflow-hidden bg-[#dcdcdc] font-['Liberation_Sans','Noto_Sans_CJK_SC',sans-serif]">
      <header className="flex h-[11px] shrink-0 items-end justify-between overflow-hidden bg-[#f2f2f2] text-[#7a7a7a]">
        <h1 className="pb-1 text-[12px] leading-4 whitespace-pre">4.43 - 远程桌面连接</h1>
        <svg viewBox="0 0 70 11" className="h-[11px] w-[70px]" fill="none" stroke="currentColor">
          <path d="M1-4h6v6h-6zM9-2v2M44-4l7 7M51-4l-7 7" />
        </svg>
      </header>
      <main className="grid flex-1 grid-cols-[37px_448fr_7px_448fr_16px_447fr_1px_443fr_7px] bg-linear-to-r from-[#00adff] from-25% via-[#0086ea] via-52% to-[#053cb4]">
        <DesktopIcons />
        {TERMINALS.map((terminal, i) => (
          <TerminalWindow key={terminal.account} terminal={terminal} column={COLUMNS[i]} />
        ))}
      </main>
      <Taskbar />
      <div className="flex h-[11px] shrink-0 items-end border-t border-[#b5b0b8] bg-[#dcdcdc]">
        <div className="ml-[107px] h-0.5 w-2.5 rounded-t-full bg-[#2f68c8]" />
        <div className="ml-[55px] h-1.5 w-[38px] rounded-t bg-[#ececec]" />
      </div>
    </div>
  );
}
